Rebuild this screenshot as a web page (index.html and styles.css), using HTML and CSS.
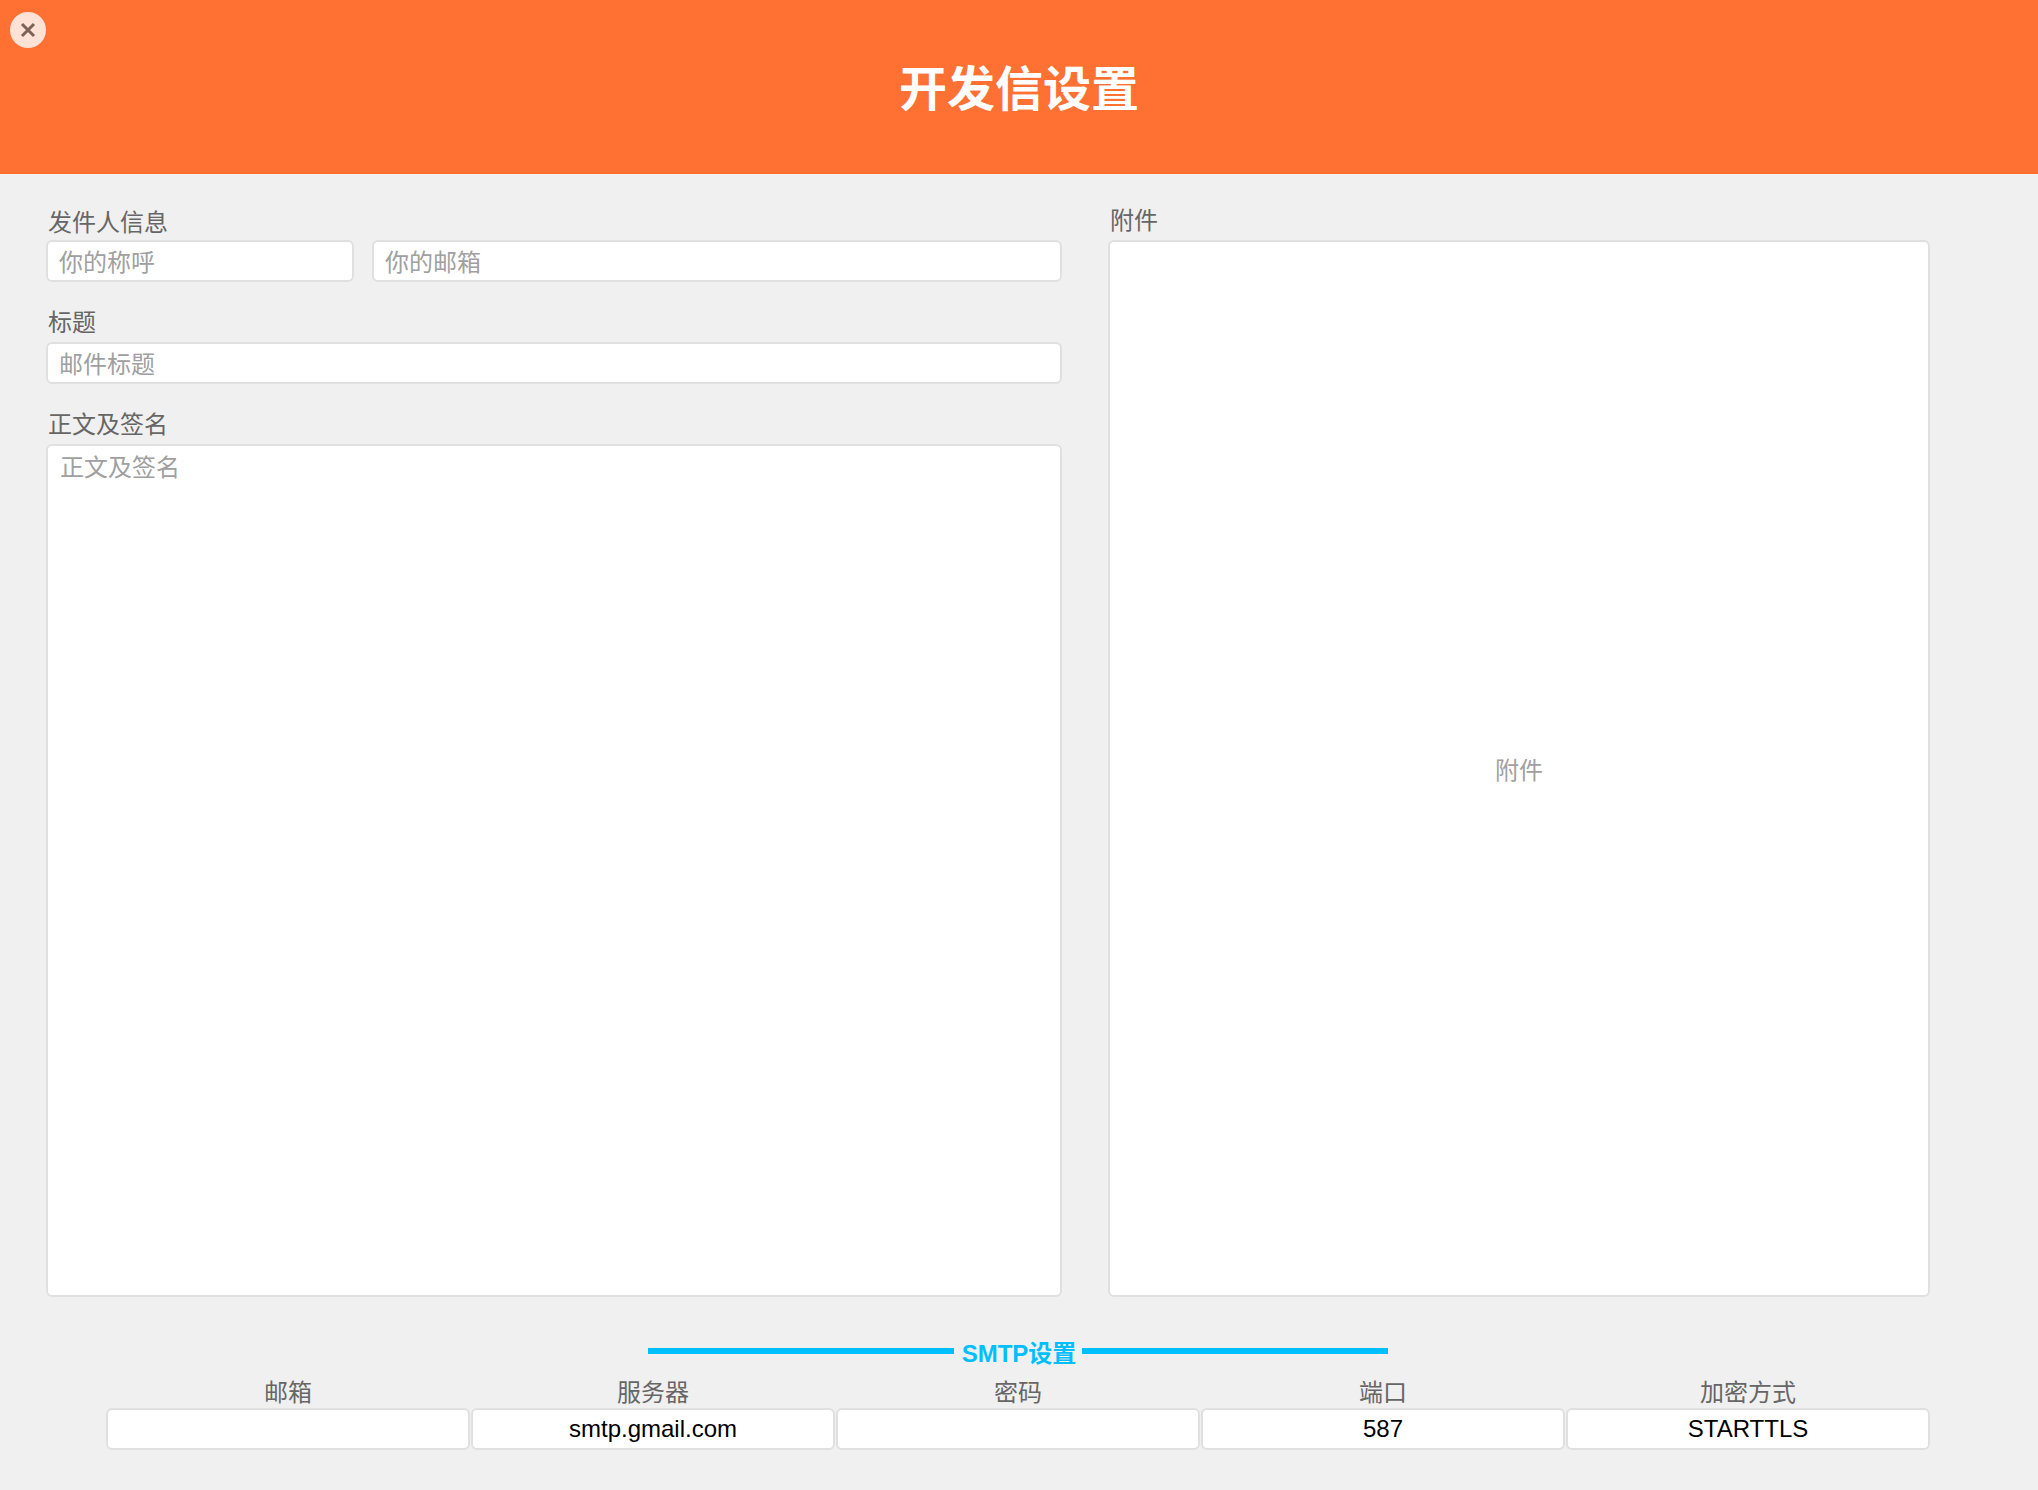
FILE: index.html
```html
<!DOCTYPE html>
<html lang="zh">
<head>
<meta charset="utf-8">
<title>开发信设置</title>
<link rel="stylesheet" href="styles.css">
</head>
<body>
<header class="top">
  <button class="close" type="button" aria-label="关闭">
    <svg viewBox="0 0 36 36" width="36" height="36"><path d="M12 12 L24 24 M24 12 L12 24" /></svg>
  </button>
  <h1 class="title">开发信设置</h1>
</header>
<main class="main">
  <section class="editor">
    <div class="left">
      <label class="lbl lbl-first">发件人信息</label>
      <div class="sender">
        <div class="field field-name">你的称呼</div>
        <div class="field field-mail">你的邮箱</div>
      </div>
      <label class="lbl lbl-subject">标题</label>
      <div class="field">邮件标题</div>
      <label class="lbl lbl-body">正文及签名</label>
      <div class="textarea">正文及签名</div>
    </div>
    <div class="right">
      <label class="lbl lbl-attach">附件</label>
      <div class="attach">附件</div>
    </div>
  </section>
  <section class="smtp">
    <div class="divider"><span class="rule"></span><span class="divider-text">SMTP设置</span><span class="rule"></span></div>
    <div class="grid">
      <div class="col"><div class="col-lbl">邮箱</div><div class="val"></div></div>
      <div class="col"><div class="col-lbl">服务器</div><div class="val">smtp.gmail.com</div></div>
      <div class="col"><div class="col-lbl">密码</div><div class="val"></div></div>
      <div class="col"><div class="col-lbl">端口</div><div class="val">587</div></div>
      <div class="col"><div class="col-lbl">加密方式</div><div class="val">STARTTLS</div></div>
    </div>
  </section>
</main>
</body>
</html>
```
FILE: styles.css
```css
* { box-sizing: border-box; }
html, body { margin: 0; height: 100%; }
body {
  background: #f0f0f0;
  font-family: "Noto Sans CJK SC", "Liberation Sans", sans-serif;
  font-size: 24px;
  color: #666;
  overflow: hidden;
}
.top {
  position: relative;
  height: 174px;
  background: #ff7033;
  display: flex;
  align-items: center;
  justify-content: center;
}
.title {
  margin: 0 0 4px;
  font-size: 48px;
  font-weight: 700;
  line-height: 60px;
  color: #fff;
}
.close {
  position: absolute;
  left: 10px;
  top: 12px;
  width: 36px;
  height: 36px;
  padding: 0;
  border: 0;
  border-radius: 50%;
  background: #ffe2d6;
}
.close svg { display: block; }
.close path { fill: none; stroke: #7d6257; stroke-width: 3px; }
.main { padding: 0 108px 0 46px; }
.editor { display: flex; gap: 46px; height: 1123px; }
.left { width: 1016px; display: flex; flex-direction: column; }
.right { width: 822px; display: flex; flex-direction: column; }
.lbl { display: block; line-height: 30px; }
.lbl-first { margin: 32px 0 0 2px; height: 34px; }
.lbl-subject { margin: 24px 0 0 2px; height: 36px; padding-top: 0; }
.lbl-body { margin: 24px 0 0 2px; height: 36px; }
.lbl-attach { margin: 30px 0 0 2px; height: 36px; }
.sender { display: flex; gap: 18px; }
.field-name { width: 308px; }
.field-mail { flex: 1; }
.field, .textarea, .val, .attach {
  background: #fff;
  border: 2px solid #e0e0e0;
  border-radius: 6px;
}
.field {
  height: 42px;
  padding: 0 11px;
  line-height: 38px;
  color: #a0a0a0;
}
.textarea {
  height: 853px;
  padding: 2px 12px;
  line-height: 36px;
  color: #a0a0a0;
}
.attach {
  height: 1057px;
  display: flex;
  align-items: center;
  justify-content: center;
  color: #a0a0a0;
}
.smtp { margin-left: 60px; }
.divider {
  display: flex;
  align-items: center;
  justify-content: center;
  height: 30px;
  margin-top: 39px;
  margin-right: 0;
  transform: none;
}
.rule { width: 306px; height: 6px; background: #00bfff; }
.divider-text {
  padding: 0 6px 0 8px;
  color: #00bfff;
  font-weight: 700;
  font-family: "Liberation Sans", "Noto Sans CJK SC", sans-serif;
  white-space: nowrap;
}
.grid { display: grid; grid-template-columns: repeat(5, 364px); column-gap: 1px; margin-top: 8px; }
.col { text-align: center; }
.col-lbl { height: 34px; line-height: 34px; }
.val {
  height: 42px;
  line-height: 38px;
  color: #000;
  font-family: "Liberation Sans", sans-serif;
}
```
